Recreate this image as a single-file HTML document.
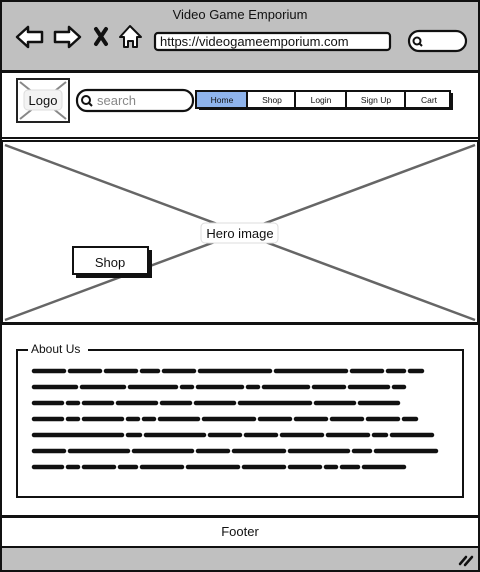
<!DOCTYPE html>
<html><head><meta charset="utf-8"><style>
html,body{margin:0;padding:0;background:#fff;width:480px;height:572px;overflow:hidden}
svg{display:block}
text{font-family:"Liberation Sans",sans-serif}
</style></head><body>
<svg width="480" height="572" viewBox="0 0 480 572" xmlns="http://www.w3.org/2000/svg">
<rect x="1" y="1" width="478" height="570" fill="#fff" stroke="#111" stroke-width="2"/>
<rect x="1" y="1" width="478" height="70" fill="#c0c0c0" stroke="#111" stroke-width="2"/>
<text x="240" y="19" font-size="13" text-anchor="middle" fill="#111">Video Game Emporium</text>
<path d="M17 37 L28 27 L28 32 L42 32 L42 42 L28 42 L28 47 Z" fill="#fff" stroke="#111" stroke-width="2.5" stroke-linejoin="round"/>
<path d="M80 37 L69 27 L69 32 L55 32 L55 42 L69 42 L69 47 Z" fill="#fff" stroke="#111" stroke-width="2.5" stroke-linejoin="round"/>
<path d="M96 29 L106 44 M106 29 L96 44" stroke="#111" stroke-width="4" stroke-linecap="round"/>
<path d="M130 26 L120 37 L124 37 L124 47 L128 47 L128 41 L133 41 L133 47 L137 47 L137 37 L141 37 Z" fill="#fff" stroke="#111" stroke-width="2" stroke-linejoin="round"/>
<rect x="155" y="33" width="235" height="17" rx="3" fill="#fff" stroke="#111" stroke-width="2.2"/>
<text x="160" y="46" font-size="13" fill="#111">https://videogameemporium.com</text>
<rect x="409" y="31" width="57" height="20" rx="10" fill="#fff" stroke="#111" stroke-width="2.2"/>
<circle cx="417" cy="41" r="3.5" fill="none" stroke="#111" stroke-width="2"/>
<path d="M419.5 43.5 L422 46" stroke="#111" stroke-width="2"/>
<rect x="1" y="72" width="478" height="66" fill="#fff" stroke="#111" stroke-width="2"/>
<rect x="17" y="79" width="52" height="43" fill="#fff" stroke="#222" stroke-width="2"/>
<path d="M20 82 L66 119 M66 82 L20 119" stroke="#888" stroke-width="2"/>
<rect x="24" y="90" width="38" height="20" rx="4" fill="#f3f3f3" stroke="#ddd"/>
<text x="43" y="105" font-size="13" text-anchor="middle" fill="#111">Logo</text>
<rect x="77" y="90" width="116" height="21" rx="10" fill="#fff" stroke="#111" stroke-width="2.2"/>
<circle cx="86" cy="100" r="4" fill="none" stroke="#111" stroke-width="2"/>
<path d="M89 103 L92 106" stroke="#111" stroke-width="2"/>
<text x="97" y="105" font-size="13" fill="#888">search</text>
<rect x="199" y="93" width="254" height="17" fill="#111"/>
<rect x="196" y="91" width="254" height="17" fill="#fff" stroke="#111" stroke-width="2"/>
<rect x="197" y="92" width="50" height="15" fill="#8fb4ec"/>
<path d="M247 91 V108 M295 91 V108 M346 91 V108 M405 91 V108" stroke="#111" stroke-width="2"/>
<g font-size="8.5" text-anchor="middle" fill="#111">
<text x="222" y="103">Home</text><text x="272" y="103">Shop</text><text x="321" y="103">Login</text><text x="376" y="103">Sign Up</text><text x="429" y="103">Cart</text>
</g>
<rect x="2" y="141" width="476" height="182" fill="#fff" stroke="#111" stroke-width="2"/>
<path d="M5 145 L475 320 M475 145 L5 320" stroke="#666" stroke-width="2.5"/>
<rect x="201" y="223" width="77" height="20" rx="4" fill="#fff" stroke="#ddd"/>
<text x="240" y="238" font-size="13" text-anchor="middle" fill="#111">Hero image</text>
<rect x="76" y="250" width="76" height="28" fill="#111"/>
<rect x="73" y="247" width="75" height="27" fill="#fff" stroke="#111" stroke-width="2"/>
<text x="110" y="267" font-size="13" text-anchor="middle" fill="#111">Shop</text>
<rect x="1" y="324" width="478" height="192" fill="#fff" stroke="#111" stroke-width="2"/>
<rect x="17" y="350" width="446" height="147" fill="#fff" stroke="#111" stroke-width="2"/>
<rect x="28" y="340" width="60" height="16" fill="#fff"/>
<text x="31" y="353" font-size="12" fill="#111">About Us</text>
<g stroke="#111" stroke-width="4.5" stroke-linecap="round" fill="none">
<path d="M34 371h30M70 371h30M106 371h30M142 371h16M164 371h30M200 371h70M276 371h70M352 371h30M388 371h16M410 371h12"/>
<path d="M34 387h42M82 387h42M130 387h46M182 387h10M198 387h44M248 387h10M264 387h44M314 387h30M350 387h38M394 387h10"/>
<path d="M34 403h28M68 403h10M84 403h28M118 403h38M162 403h28M196 403h38M240 403h70M316 403h38M360 403h38"/>
<path d="M34 419h28M68 419h10M84 419h38M128 419h10M144 419h10M160 419h38M204 419h50M260 419h30M296 419h30M332 419h30M368 419h30M404 419h12"/>
<path d="M34 435h88M128 435h12M146 435h58M210 435h30M246 435h30M282 435h40M328 435h40M374 435h12M392 435h40"/>
<path d="M34 451h30M70 451h58M134 451h58M198 451h30M234 451h50M290 451h58M354 451h16M376 451h60"/>
<path d="M34 467h28M68 467h10M84 467h30M120 467h16M142 467h40M188 467h50M244 467h40M290 467h30M326 467h10M342 467h16M364 467h40"/>
</g>
<rect x="1" y="517" width="478" height="30" fill="#fff" stroke="#111" stroke-width="2"/>
<text x="240" y="536" font-size="13" text-anchor="middle" fill="#111">Footer</text>
<rect x="1" y="547" width="478" height="24" fill="#c0c0c0" stroke="#111" stroke-width="2"/>
<path d="M460 564 L466 557 M465 565 L472 557" stroke="#111" stroke-width="2.5" stroke-linecap="round"/>
</svg>
</body></html>
